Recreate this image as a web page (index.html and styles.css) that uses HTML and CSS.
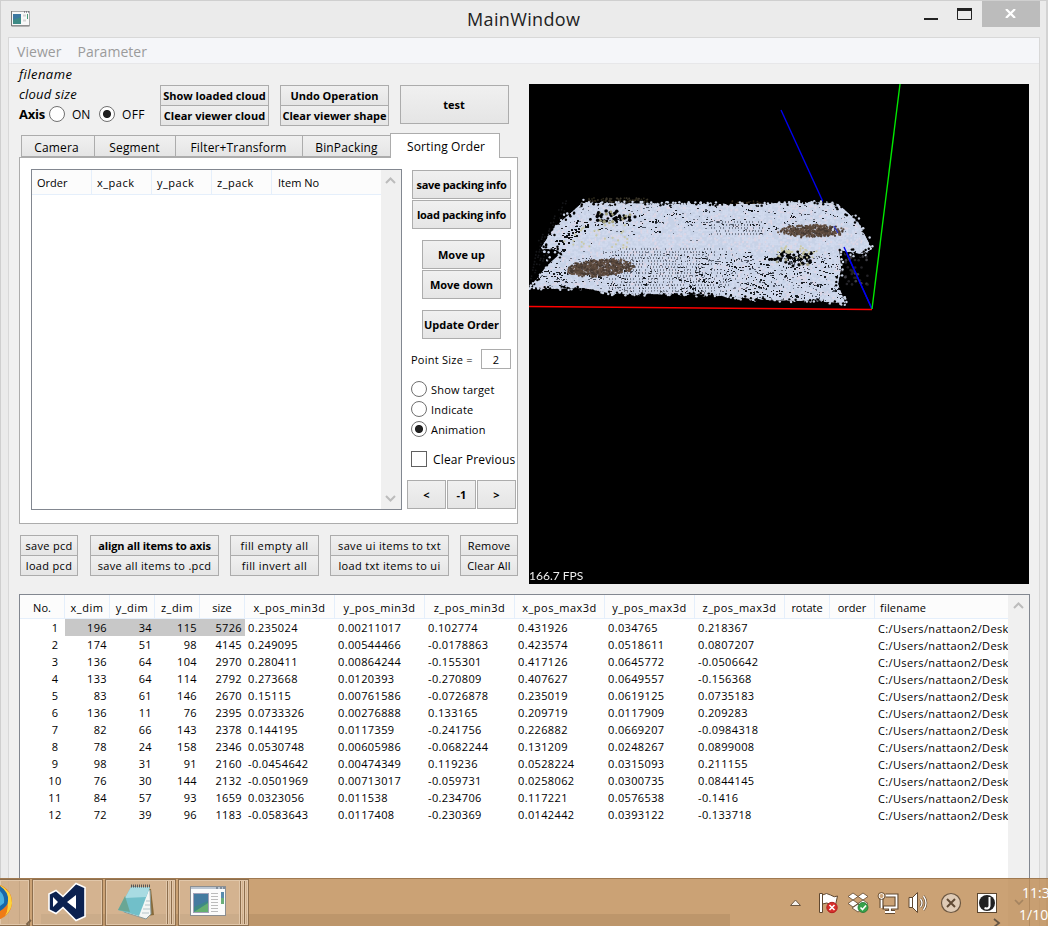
FILE: index.html
```html
<!DOCTYPE html>
<html lang="en">
<head>
<meta charset="utf-8">
<title>MainWindow</title>
<link rel="stylesheet" href="styles.css">
</head>
<body>
<div class="window">
  <header class="titlebar">
    <svg class="app-icon" width="19" height="16" viewBox="0 0 19 16"><rect x=".5" y=".5" width="18" height="14" fill="#f8f8f8" stroke="#aaa"/><path d="M.5 0v15h18" fill="none" stroke="#777"/><rect x="2" y="3" width="8" height="10" fill="#3d8a85"/><path d="M2 3h8v3l-8 3z" fill="#3c78a0"/><path d="M12 4.500h3M12 9.500h3" stroke="#d4d4d4" stroke-width="2"/><path d="M16.500 3v5" stroke="#4a9a78"/><path d="M13 1h1M15 1h1M17 1h1" stroke="#445"/></svg>
    <h1 class="title">MainWindow</h1>
    <div class="controls">
      <svg class="ctl" width="84" height="27" viewBox="0 0 84 27"><path d="M0 18h14" stroke="#222" stroke-width="2"/><path d="M33.500 8v10.500h14V8" fill="none" stroke="#222"/><path d="M33 8.500h15" stroke="#222" stroke-width="3"/></svg>
      <span class="close"><svg width="11" height="9" viewBox="0 0 11 9"><path d="M1 0l9 9M10 0l-9 9" stroke="#fff" stroke-width="2.200"/></svg></span>
    </div>
  </header>
  <main class="client">
    <nav class="menu"><span>Viewer</span><span>Parameter</span></nav>
    <div class="upper">
      <section class="left">
        <div class="top">
          <div class="info">
            <em>filename</em>
            <em>cloud size</em>
            <div class="axis"><b>Axis</b><i class="radio"></i><span class="on">ON</span><i class="radio checked"></i><span class="off">OFF</span></div>
          </div>
          <div class="stack bold w109"><button>Show loaded cloud</button><button>Clear viewer cloud</button></div>
          <div class="stack bold w109"><button>Undo Operation</button><button>Clear viewer shape</button></div>
          <button class="test">test</button>
        </div>
        <div class="tabs"><span class="tab t1">Camera</span><span class="tab t2">Segment</span><span class="tab t3">Filter+Transform</span><span class="tab t4">BinPacking</span><span class="tab active">Sorting Order</span></div>
        <div class="pane">
          <div class="list">
            <div class="list-main"><div class="list-head"><span>Order</span><span class="sp">x_pack</span><span class="sp">y_pack</span><span class="sp">z_pack</span><span>Item No</span></div></div>
            <div class="scroll"><svg width="11" height="7"><path d="M1 6l4.500-4.500L10 6" /></svg><svg width="11" height="7"><path d="M1 1l4.500 4.500L10 1"/></svg></div>
          </div>
          <div class="side">
            <button class="wide">save packing info</button><button class="wide">load packing info</button>
            <button class="mid gap">Move up</button><button class="mid">Move down</button>
            <button class="mid gap update"><span>Update Order</span></button>
            <label class="point"><span>Point Size =</span><span class="field">2</span></label>
            <div class="opts"><div><i class="radio"></i><span class="o1">Show target</span></div><div><i class="radio"></i><span>Indicate</span></div><div><i class="radio checked"></i><span>Animation</span></div></div>
            <div class="check"><i></i><span>Clear Previous</span></div>
            <div class="step"><button>&lt;</button><button>-1</button><button>&gt;</button></div>
          </div>
        </div>
        <div class="actions">
          <div class="stack a1"><button>save pcd</button><button>load pcd</button></div>
          <div class="stack a2"><button><b>align all items to axis</b></button><button>save all items to .pcd</button></div>
          <div class="stack a3"><button>fill empty all</button><button>fill invert all</button></div>
          <div class="stack a4"><button>save ui items to txt</button><button>load txt items to ui</button></div>
          <div class="stack a5"><button>Remove</button><button>Clear All</button></div>
        </div>
      </section>
      <section class="viewer"><canvas id="cloud" width="500" height="500"></canvas><span class="fps">166.7 FPS</span></section>
    </div>
    <section class="data">
      <div class="data-main">
      <table>
        <colgroup><col class="c45" span="5"><col class="c90" span="6"><col class="c45" span="2"><col class="c134"></colgroup>
        <thead><tr><th>No.<th class="sp">x_dim<th class="sp">y_dim<th class="sp">z_dim<th>size<th class="sp">x_pos_min3d<th class="sp">y_pos_min3d<th class="sp">z_pos_min3d<th class="sp">x_pos_max3d<th class="sp">y_pos_max3d<th class="sp">z_pos_max3d<th>rotate<th>order<th>filename</tr></thead>
        <tbody>
        <tr class="sel"><td>1<td>196<td>34<td>115<td>5726<td>0.235024<td>0.00211017<td>0.102774<td>0.431926<td>0.034765<td>0.218367<td><td><td>C:/Users/nattaon2/Desk</tr>
        <tr><td>2<td>174<td>51<td>98<td>4145<td>0.249095<td>0.00544466<td>-0.0178863<td>0.423574<td>0.0518611<td>0.0807207<td><td><td>C:/Users/nattaon2/Desk</tr>
        <tr><td>3<td>136<td>64<td>104<td>2970<td>0.280411<td>0.00864244<td>-0.155301<td>0.417126<td>0.0645772<td>-0.0506642<td><td><td>C:/Users/nattaon2/Desk</tr>
        <tr><td>4<td>133<td>64<td>114<td>2792<td>0.273668<td>0.0120393<td>-0.270809<td>0.407627<td>0.0649557<td>-0.156368<td><td><td>C:/Users/nattaon2/Desk</tr>
        <tr><td>5<td>83<td>61<td>146<td>2670<td>0.15115<td>0.00761586<td>-0.0726878<td>0.235019<td>0.0619125<td>0.0735183<td><td><td>C:/Users/nattaon2/Desk</tr>
        <tr><td>6<td>136<td>11<td>76<td>2395<td>0.0733326<td>0.00276888<td>0.133165<td>0.209719<td>0.0117909<td>0.209283<td><td><td>C:/Users/nattaon2/Desk</tr>
        <tr><td>7<td>82<td>66<td>143<td>2378<td>0.144195<td>0.0117359<td>-0.241756<td>0.226882<td>0.0669207<td>-0.0984318<td><td><td>C:/Users/nattaon2/Desk</tr>
        <tr><td>8<td>78<td>24<td>158<td>2346<td>0.0530748<td>0.00605986<td>-0.0682244<td>0.131209<td>0.0248267<td>0.0899008<td><td><td>C:/Users/nattaon2/Desk</tr>
        <tr><td>9<td>98<td>31<td>91<td>2160<td>-0.0454642<td>0.00474349<td>0.119236<td>0.0528224<td>0.0315093<td>0.211155<td><td><td>C:/Users/nattaon2/Desk</tr>
        <tr><td>10<td>76<td>30<td>144<td>2132<td>-0.0501969<td>0.00713017<td>-0.059731<td>0.0258062<td>0.0300735<td>0.0844145<td><td><td>C:/Users/nattaon2/Desk</tr>
        <tr><td>11<td>84<td>57<td>93<td>1659<td>0.0323056<td>0.011538<td>-0.234706<td>0.117221<td>0.0576538<td>-0.1416<td><td><td>C:/Users/nattaon2/Desk</tr>
        <tr><td>12<td>72<td>39<td>96<td>1183<td>-0.0583643<td>0.0117408<td>-0.230369<td>0.0142442<td>0.0393122<td>-0.133718<td><td><td>C:/Users/nattaon2/Desk</tr>
        </tbody>
      </table>
      </div>
      <div class="scroll"><svg width="11" height="7"><path d="M1 6l4.500-4.500L10 6"/></svg></div>
    </section>
  </main>
</div>
<footer class="taskbar">
  <div class="through"></div>
  <div class="tasks">
    <div class="task ff"><svg width="14" height="38" viewBox="0 0 14 38"><circle cx="-6" cy="19" r="18" fill="#ee7b17"/><path d="M0 2q12 6 12 18q-1 8-7 13q5-9 1-18z" fill="#fcd33c"/><path d="M0 3q9 6 8 15q0 5-8 10z" fill="#1767a8"/><path d="M0 8q5 5 4 12l-4 3z" fill="#49b1df"/></svg></div>
    <div class="task vs"><svg width="38" height="40" viewBox="0 0 38 40"><path d="M28 1.500l9 4v29l-9 4-13-13-7 6-7-3.500V12l7-3.500 7 6z" fill="#0b2150" stroke="#fff" stroke-width="1.600"/><path d="M28 13v14l-9-7zM5 15v10l5-5z" fill="#fff"/></svg></div>
    <div class="task multi note"><svg width="37" height="37" viewBox="0 0 37 37"><path d="M16 4l18 2 3 26-7 1z" fill="#876a39"/><path d="M15 3l18 4 1 24-5 5-22-7z" fill="#f4f6f4" stroke="#899"/><path d="M14 4h19L22 33 1 27z" fill="#71bfc9"/><path d="M14 4h19l-4 10-21 1z" fill="#a8dbe2"/><path d="M1 27L8 13l5 16z" fill="#6aa694"/><path d="M14 3h20" stroke="#555" stroke-width="3" stroke-dasharray="1 1"/><path d="M29 18h4M28 22h5M26 26h7M25 30h7" stroke="#b5c4c8"/></svg></div>
    <div class="task multi win"><svg width="37" height="31" viewBox="0 0 37 31"><rect x=".5" y=".5" width="35" height="29" fill="#fbfbfb" stroke="#8b8e91"/><path d="M1 2h34" stroke="#bcc6d2" stroke-width="2"/><path d="M26 2h2M30 2h2M33 2h2" stroke="#456"/><rect x="3.500" y="7.500" width="15" height="19" fill="#3e8986" stroke="#a1a1b8"/><path d="M4 8h14v7L4 21z" fill="#447ba0"/><path d="M4 26h14v-9z" fill="#64af70"/><path d="M21 7.500h7M21 10.500h7M21 13.500h7M21 16.500h7M21 19.500h7M21 22.500h7M21 25.500h7" stroke="#bbb"/><path d="M32.500 6v12" stroke="#598cad" stroke-width="3"/><path d="M32.500 12v6" stroke="#6aae78" stroke-width="3"/></svg></div>
  </div>
  <svg class="tray" width="288" height="48" viewBox="0 0 288 48">
    <path d="M30.500 27.500l5-5.500 5 5.500z" fill="#f5f1ed" stroke="#6c5740"/>
    <g stroke="#604830" fill="#fff"><path d="M59.500 15.500h3v19h-3zM62.500 17q4-3 8 0t7 1l-2 9q-4 1-6-1t-7 0z"/><circle cx="72" cy="29.500" r="5.200" fill="#d72f2b" stroke="#b42020"/><path d="M69.500 27l5 5m0-5l-5 5" stroke-width="1.600" stroke="#fff"/></g>
    <g stroke="#604830" fill="#fff" stroke-width=".8"><path d="M93 15l5 3.500-5 3.500-5-3.500zM103 15l5 3.500-5 3.500-5-3.500zM93 22l5 3.500-5 3.500-5-3.500zM103 22l5 3.500-5 3.500-5-3.500zM98 26l6 4-6 4-6-4z"/><circle cx="103" cy="29.500" r="5" fill="#37a24a" stroke="#227332"/><path d="M100.500 29.500l2 2 3.500-4" fill="none" stroke="#fff" stroke-width="1.600"/></g>
    <g fill="none"><path d="M125.500 17.500h11v12h-14M130 30v3m-5 1h10M121.500 20v10" stroke="#604830" stroke-width="4"/><path d="M125.500 17.500h11v12h-12.500M130 30v3m-5 1h10M121.500 20v10" stroke="#fff" stroke-width="1.800"/><circle cx="121.500" cy="18" r="2.500" fill="#cba47a" stroke="#fff"/><circle cx="121.500" cy="18" r="3.500" stroke="#604830" stroke-width=".8"/></g>
    <g fill="#fff" stroke="#604830"><path d="M149 19.500h3.500l5-5v20l-5-5H149z"/><path d="M152.500 19v11"/><path d="M160.500 21q3 4 0 8M163.500 18q5 7 0 14" fill="none" stroke="#604830" stroke-width="2.600"/><path d="M160.500 21q3 4 0 8M163.500 18q5 7 0 14" fill="none" stroke="#fff" stroke-width="1.300"/></g>
    <circle cx="191" cy="25" r="9.500" fill="#dfcbb6" stroke="#6b5640" stroke-width="1.200"/><path d="M187 21l8 8m0-8l-8 8" stroke="#604a34" stroke-width="2"/>
    <rect x="217.500" y="15.500" width="19" height="19" fill="#fff" stroke="#5b462f"/><circle cx="227" cy="25" r="8" fill="#222"/><path d="M229.500 19v9q-.5 3.500-5 2" fill="none" stroke="#fff" stroke-width="2"/>
    <path d="M255 22l4 4 4-4" fill="none" stroke="#a58460" stroke-width="1.700"/><path d="M234 41l5 4-5 4" fill="none" stroke="#665544" stroke-width="1.800"/>
  </svg>
  <svg class="arrow" width="8" height="8" viewBox="0 0 8 8"><path d="M6 1L2 5l4 4" fill="none" stroke="#7a6248" stroke-width="1.800"/></svg>
  <div class="clock"><span>11:3</span><span>1/10</span></div>
</footer>
<script src="cloud.js"></script>
</body>
</html>
```
FILE: styles.css
```css
*{box-sizing:border-box}
body{margin:0;width:1048px;height:926px;overflow:hidden;position:relative;background:#ebebeb;font:12px/16px "Open Sans","Noto Sans",sans-serif;color:#000}
button{font:inherit;letter-spacing:inherit;color:#000;margin:0;padding:0;border:1px solid #acacac;background:linear-gradient(#f0f0f0,#e5e5e5);white-space:nowrap;border-radius:0}
.window{height:926px;border:1px solid #cfcfcf;border-bottom:0;border-right:2px solid #d3d3d3;padding:0 6px 0 7px;display:flex;flex-direction:column}
.titlebar{height:36px;flex:none;display:flex;justify-content:space-between;position:relative}
.app-icon{margin:10px 0 0 3px}
.title{margin:5px 0 0 0;font:400 18px/26px "Open Sans",sans-serif;letter-spacing:.35px;color:#222;position:absolute;left:459px}
.controls{display:flex}
.ctl{margin-right:-26px}
.close{width:58px;height:26px;background:#bcbcbc;display:flex;align-items:center;justify-content:center;padding:0 2px 2px 0}
.client{flex:1;min-height:0;background:#f0f0f0;border:1px solid #d8d8d8;border-bottom:0;display:flex;flex-direction:column}
.menu{height:26px;flex:none;background:#f5f6f9;border-bottom:1px solid #e7e7e9;display:flex;gap:16px;padding:4px 8px 2px;font-size:14px;line-height:20px;color:#9b9b9b;letter-spacing:.05px}
.upper{display:flex;height:520px;flex:none;padding-left:10px}
.left{width:499px;margin-right:11px}
.viewer{width:500px;height:500px;margin-top:20px;background:#000;position:relative}
canvas{display:block}
.fps{position:absolute;left:0;bottom:0;color:#eee;font:12px/17px Lato,sans-serif}
.top{display:flex;height:72px;align-items:flex-start}
.info{width:141px;display:flex;flex-direction:column;font-size:13px;line-height:20px}
.info em{letter-spacing:.45px}
.info em+em{letter-spacing:.2px}
.axis{display:flex;align-items:center;height:20px;font-size:12px}
.axis b{width:30px;font-size:13px;letter-spacing:-.2px}
.radio{flex:none;width:16px;height:16px;border:1px solid #707070;border-radius:50%;background:#fff}
.checked{background:radial-gradient(circle,#202020 3.600px,#fff 4.500px)}
.on{margin-left:7px;width:27px}.off{margin-left:7px;letter-spacing:.4px}
.on,.off{padding-top:1px}
.stack{display:flex;flex-direction:column;margin-top:21px}
.stack button{height:21px;line-height:19px}
.stack button+button{margin-top:-1px}
.w109{width:109px;margin-right:11px}
.bold,.test,.side button{font-weight:700;font-size:11px}
.test{width:109px;height:39px;margin-top:21px;padding-right:1px}
.tabs{height:22px;display:flex;align-items:flex-end;padding-left:2px;font-size:12px;letter-spacing:.15px;margin-top:-1px;position:relative;z-index:1}
.tab{height:22px;border:1px solid #acacac;background:linear-gradient(#f0f0f0,#e5e5e5);text-align:center;line-height:23px;margin-right:-1px}
.t1{width:74px;padding-right:3px}.t2{width:82px;padding-right:1px}.t3{width:128px;padding-right:1px}.t4{width:89px}
.active{width:110px;height:25px;background:#fff;border-bottom:0;margin-bottom:-1px;line-height:25px;padding-left:2px}
.pane{height:367px;border:1px solid #acacac;background:#fff;padding:11px 0 0 11px;display:flex;align-items:flex-start}
.list{width:371px;height:341px;border:1px solid #828790;display:flex;flex:none}
.list-main{flex:1}
.list-head{height:25px;border-bottom:1px solid #e5effb;background:#fcfcfc;display:flex;font-size:11px;line-height:26px}
.list-head span{width:60px;padding-left:5px;border-right:1px solid #e5effb}
.list-head span:last-child{border:0;width:80px;padding-left:6px}
.sp,.list-head .sp{letter-spacing:.5px}
.scroll{width:20px;background:#f0f0f0;display:flex;flex-direction:column;justify-content:space-between;align-items:center;padding:7px 2px 7px 0}
.scroll path{fill:none;stroke:#bcbcbc;stroke-width:2}
.side{width:115px;height:345px;flex:none;display:flex;flex-direction:column;padding:1px 0 0 5px}
.side button{height:29px;flex:none;margin-bottom:1px;overflow:hidden}
.side .wide{width:99px;margin-left:5px;letter-spacing:-.3px}.mid{width:79px;margin-left:15px!important}
.side .gap{margin-top:10px}
.side .update{display:flex;justify-content:center;align-items:center;padding:0;border-width:1px}
.point{display:flex;height:20px;margin:9px 0 0 4px;line-height:21px;font-size:11px;letter-spacing:.25px}
.point>span:first-child{width:70px}
.field{width:30px;border:1px solid #acacac;text-align:center;line-height:19px}
.opts{margin:10px 0 0 4px;font-size:11px;letter-spacing:.2px}
.opts div{height:20px;display:flex;align-items:center;gap:4px}
.opts span{padding-top:1px}
.check{display:flex;align-items:center;gap:6px;margin:11px 0 0 4px;height:18px;font-size:12px;white-space:nowrap;letter-spacing:.15px}
.check span{padding-top:2px}
.check i{width:16px;height:16px;border:1px solid #606060;flex:none}
.step{display:flex;gap:1px;margin-top:12px}
.step button{width:39px}.step button:nth-child(2){width:29px}
.actions{display:flex;padding-left:1px;margin-top:-10px;gap:11px;font-size:11px;letter-spacing:.32px}
.actions b{letter-spacing:-.15px}
.a1{width:58px;margin-right:1px}.a2{width:129px}.a3{width:89px;letter-spacing:.42px}.a4{width:119px}.a5{width:58px;letter-spacing:.2px}
.data{margin:10px 0 0 10px;width:1011px;flex:1;min-height:0;border:1px solid #828790;border-bottom:0;background:#fff;display:flex}
.data-main{width:988px;overflow:hidden}
.data .scroll{width:21px;padding-right:1px}
table{border-collapse:separate;border-spacing:0;table-layout:fixed;width:989px}
.c45{width:45px}.c90{width:90px}.c134{width:134px}
th{height:24px;padding:2px 0 0;border-right:1px solid #e5effb;border-bottom:1px solid #e5effb;background:#fcfcfc;font-weight:400;font-size:11px;white-space:nowrap}
th:last-child{text-align:left;padding-left:5px;border-right:0;letter-spacing:.2px}
td{height:17px;padding:0 0 0 3px;font-size:11px;line-height:17px;white-space:nowrap;letter-spacing:.36px}
td:first-child{text-align:center;padding-left:25px}
td:nth-child(n+2):nth-child(-n+5){text-align:right;padding:0 3px 0 0}
td:last-child{overflow:hidden;position:relative;top:1px}
.sel td:nth-child(n+2):nth-child(-n+5){background:#c8c8c8}
.taskbar{position:absolute;left:0;bottom:0;width:1048px;height:48px;background:rgba(190,139,82,.8);border-top:1px solid #a07a51;overflow:hidden}
.through{position:absolute;left:41px;top:35px;width:689px;height:13px;background:rgba(100,70,45,.13)}
.tasks{display:flex;gap:2px;height:48px;position:relative}
.task{border:1px solid #8d6e4d;box-shadow:inset 0 0 0 1px #e1c7aa;background-color:rgba(226,206,186,.4);display:flex;align-items:center;justify-content:center;height:47px;padding-bottom:2px}
.task svg{flex:none}
.ff{width:30px;justify-content:flex-start;border-left:0}.vs{width:71px;padding-right:1px}
.multi{width:71px;padding-right:10px;background-image:linear-gradient(90deg,#e1c7aa 1px,#8d6e4d 1px 2px,#e1c7aa 2px 3px,transparent 3px 4px,#e1c7aa 4px 5px,#8d6e4d 5px 6px,#e1c7aa 6px 7px,transparent 7px);background-repeat:no-repeat;background-position:right 0 top 0;background-size:9px 100%}
.tray{position:absolute;left:760px;top:-1px}
.arrow{position:absolute;left:25px;top:40px}
.clock{position:absolute;left:1022px;top:3px;color:#fff;font-size:14px;line-height:22px;display:flex;flex-direction:column;white-space:nowrap}
.clock span+span{margin-left:-3px}
```
FILE: cloud.js
```js
const ctx = document.getElementById('cloud').getContext('2d');
let seed = 77;
const rnd = () => { seed = (seed * 1664525 + 1013904223) >>> 0; return seed / 4294967296; };
const line = (c, x1, y1, x2, y2) => { ctx.strokeStyle = c; ctx.lineWidth = 1.4; ctx.beginPath(); ctx.moveTo(x1, y1); ctx.lineTo(x2, y2); ctx.stroke(); };
const dot = (c, x, y, r) => { ctx.fillStyle = c; ctx.beginPath(); ctx.arc(x, y, r, 0, 7); ctx.fill(); };
const dash = (c, x, y, w, h) => { ctx.fillStyle = c; ctx.fillRect(Math.round(x), Math.round(y), w, h); };
const shape = pts => { ctx.beginPath(); pts.forEach(p => ctx.lineTo(p[0], p[1])); ctx.closePath(); };
const outline = [[53,119],[150,120],[230,120],[285,118],[309,120],[329,138],[343,165],[333,170],[310,166],[312,184],[309,200],[316,219],[285,217],[240,216],[180,211],[120,210],[85,210],[55,204],[0,205],[18,182],[34,167],[12,164],[25,144]];
const near = (x, y, cx, cy, rx, ry) => ((x-cx)/rx)**2 + ((y-cy)/ry)**2 < .4 + rnd()*.9;

line('#0000f0', 252, 26, 343, 225);

// Sparse points around the surface
for (let k = 0; k < 8; k++) {
  for (let t = 0; t < 14; t++) if (rnd() < .7) dot('#16171a', 2 + k*4 + t*.6, 194 - k*6 - t*3 + rnd()*2, .9);
}
for (let i = 0; i < 45; i++) dot(i % 3 ? '#242328' : '#414047', 312 + rnd()*27, 165 + rnd()*36, 1.3);
for (let i = 0; i < 70; i++) dot(i % 2 ? '#2c2819' : '#3d382d', 60 + rnd()*60, 114 + rnd()*4, .9);
for (let i = 0; i < 25; i++) dot('#3d3225', 200 + rnd()*35, 117 + rnd()*3, .9);

shape(outline);
ctx.save(); ctx.clip();
ctx.fillStyle = '#c9d3e7'; ctx.fillRect(0, 100, 350, 130);
for (let y = 116; y < 222; y += 2) {
  for (let x = 0; x < 350; x += 2) {
    const n = rnd();
    dot(n > .5 ? '#d1daee' : n > .12 ? '#c7d2e7' : '#ddd7e6', x + rnd(), y + rnd(), 1.2);
  }
}
// Scan gaps: a slanted dotted lattice on the front face, irregular breaks elsewhere
for (let y = 119; y < 221; y += 3) {
  for (let x = 1; x < 350; x += 3) {
    const front = y > 163, band = y > 149 && y < 166;
    const lattice = (front && x > 65 + rnd()*30 && x < 165 + rnd()*50) || (!front && x > 178 && x < 235 && y > 134 && !band);
    if (lattice && rnd() < .8) dash('#7a8292', x + (y % 9) / 6, y, 1, 2);
    if (rnd() < (band ? .02 : front ? .28 : .2)) dash(rnd() < .4 ? '#20242b' : '#6b7282', x + rnd()*2, y + rnd()*2, 1 + Math.floor(rnd()*2), 1);
  }
}
for (let k = 0; k < 190; k++) {
  let x = k < 120 ? 145 + rnd()*165 : k < 155 ? rnd()*120 : 55 + rnd()*250;
  let y = k < 120 ? 171 + rnd()*44 : k < 155 ? 180 + rnd()*25 : 122 + rnd()*24;
  for (let j = 0, n = 1 + rnd()*3; j < n; j++) {
    dash(k % 3 ? '#171b21' : '#515866', x, y, 1 + Math.floor(rnd()*2), 1 + Math.floor(rnd()*1.4));
    x += 1.500 + rnd()*2; y += rnd()*2.6 - 1;
  }
}
for (let i = 0; i < 60; i++) {
  const t = rnd();
  dash('#101317', 18 + t*30 + rnd()*14, 163 - t*30 + rnd()*8, 2, 1 + i % 2);
}
for (let i = 0; i < 130; i++) {
  const x = 55 + rnd()*54, y = 124 + rnd()*18;
  if (near(x, y, 82, 133, 24, 6)) dot(i % 4 ? '#030405' : '#a3a27e', x, y, 1.2 + rnd()*.6);
}
for (let i = 0; i < 190; i++) {
  const x = 238 + rnd()*52, y = 160 + rnd()*27;
  if (near(x, y, 264, 174, 22, 8)) dot(y < 170 ? (i % 3 ? '#b7b891' : '#030405') : (i % 5 ? '#030405' : '#a3a28a'), x, y, 1.3 + rnd()*.6);
}
for (let i = 0; i < 60; i++) {
  const right = i % 2;
  dot('#c9c9a6', (right ? 248 : 35) + rnd()*(right ? 42 : 65), (right ? 162 : 140) + rnd()*(right ? 12 : 25), 1.1);
}
ctx.restore();

const browns = ['#463a33', '#5b493c', '#665245'];
for (let i = 0; i < 1700; i++) {
  const x = 30 + rnd()*82, y = 172 + rnd()*24;
  if (near(x, y + (x - 70) * .06, 71, 184, 32, 8)) dot(browns[i%3], x, y, 1.1);
}
for (let i = 0; i < 1300; i++) {
  const x = 239 + rnd()*82, y = 136 + rnd()*22;
  if (near(x, y, 283, 147, 31, 6)) dot(browns[i%3], x, y, 1.1);
}
// Irregular rim
for (let i = 0; i < outline.length; i++) {
  const a = outline[i], b = outline[(i+1) % outline.length], d = Math.hypot(b[0]-a[0], b[1]-a[1]);
  for (let t = 0; t < d; t += 1.8) {
    const x = a[0] + (b[0]-a[0])*t/d, y = a[1] + (b[1]-a[1])*t/d;
    const rough = x > 305 || (x < 55 && y < 180) ? 8 : 3.5;
    dot(rnd() < .55 ? '#ccd5e7' : '#000', x + (rnd()-.5)*rough, y + (rnd()-.5)*rough, 1.2);
  }
}
line('#3038c8', 305, 142, 309, 149);
line('#0000f0', 315, 163, 343, 225);
line('#f00', 0, 222.5, 343, 225.5);
line('#00e800', 371, 0, 343, 225);
```
